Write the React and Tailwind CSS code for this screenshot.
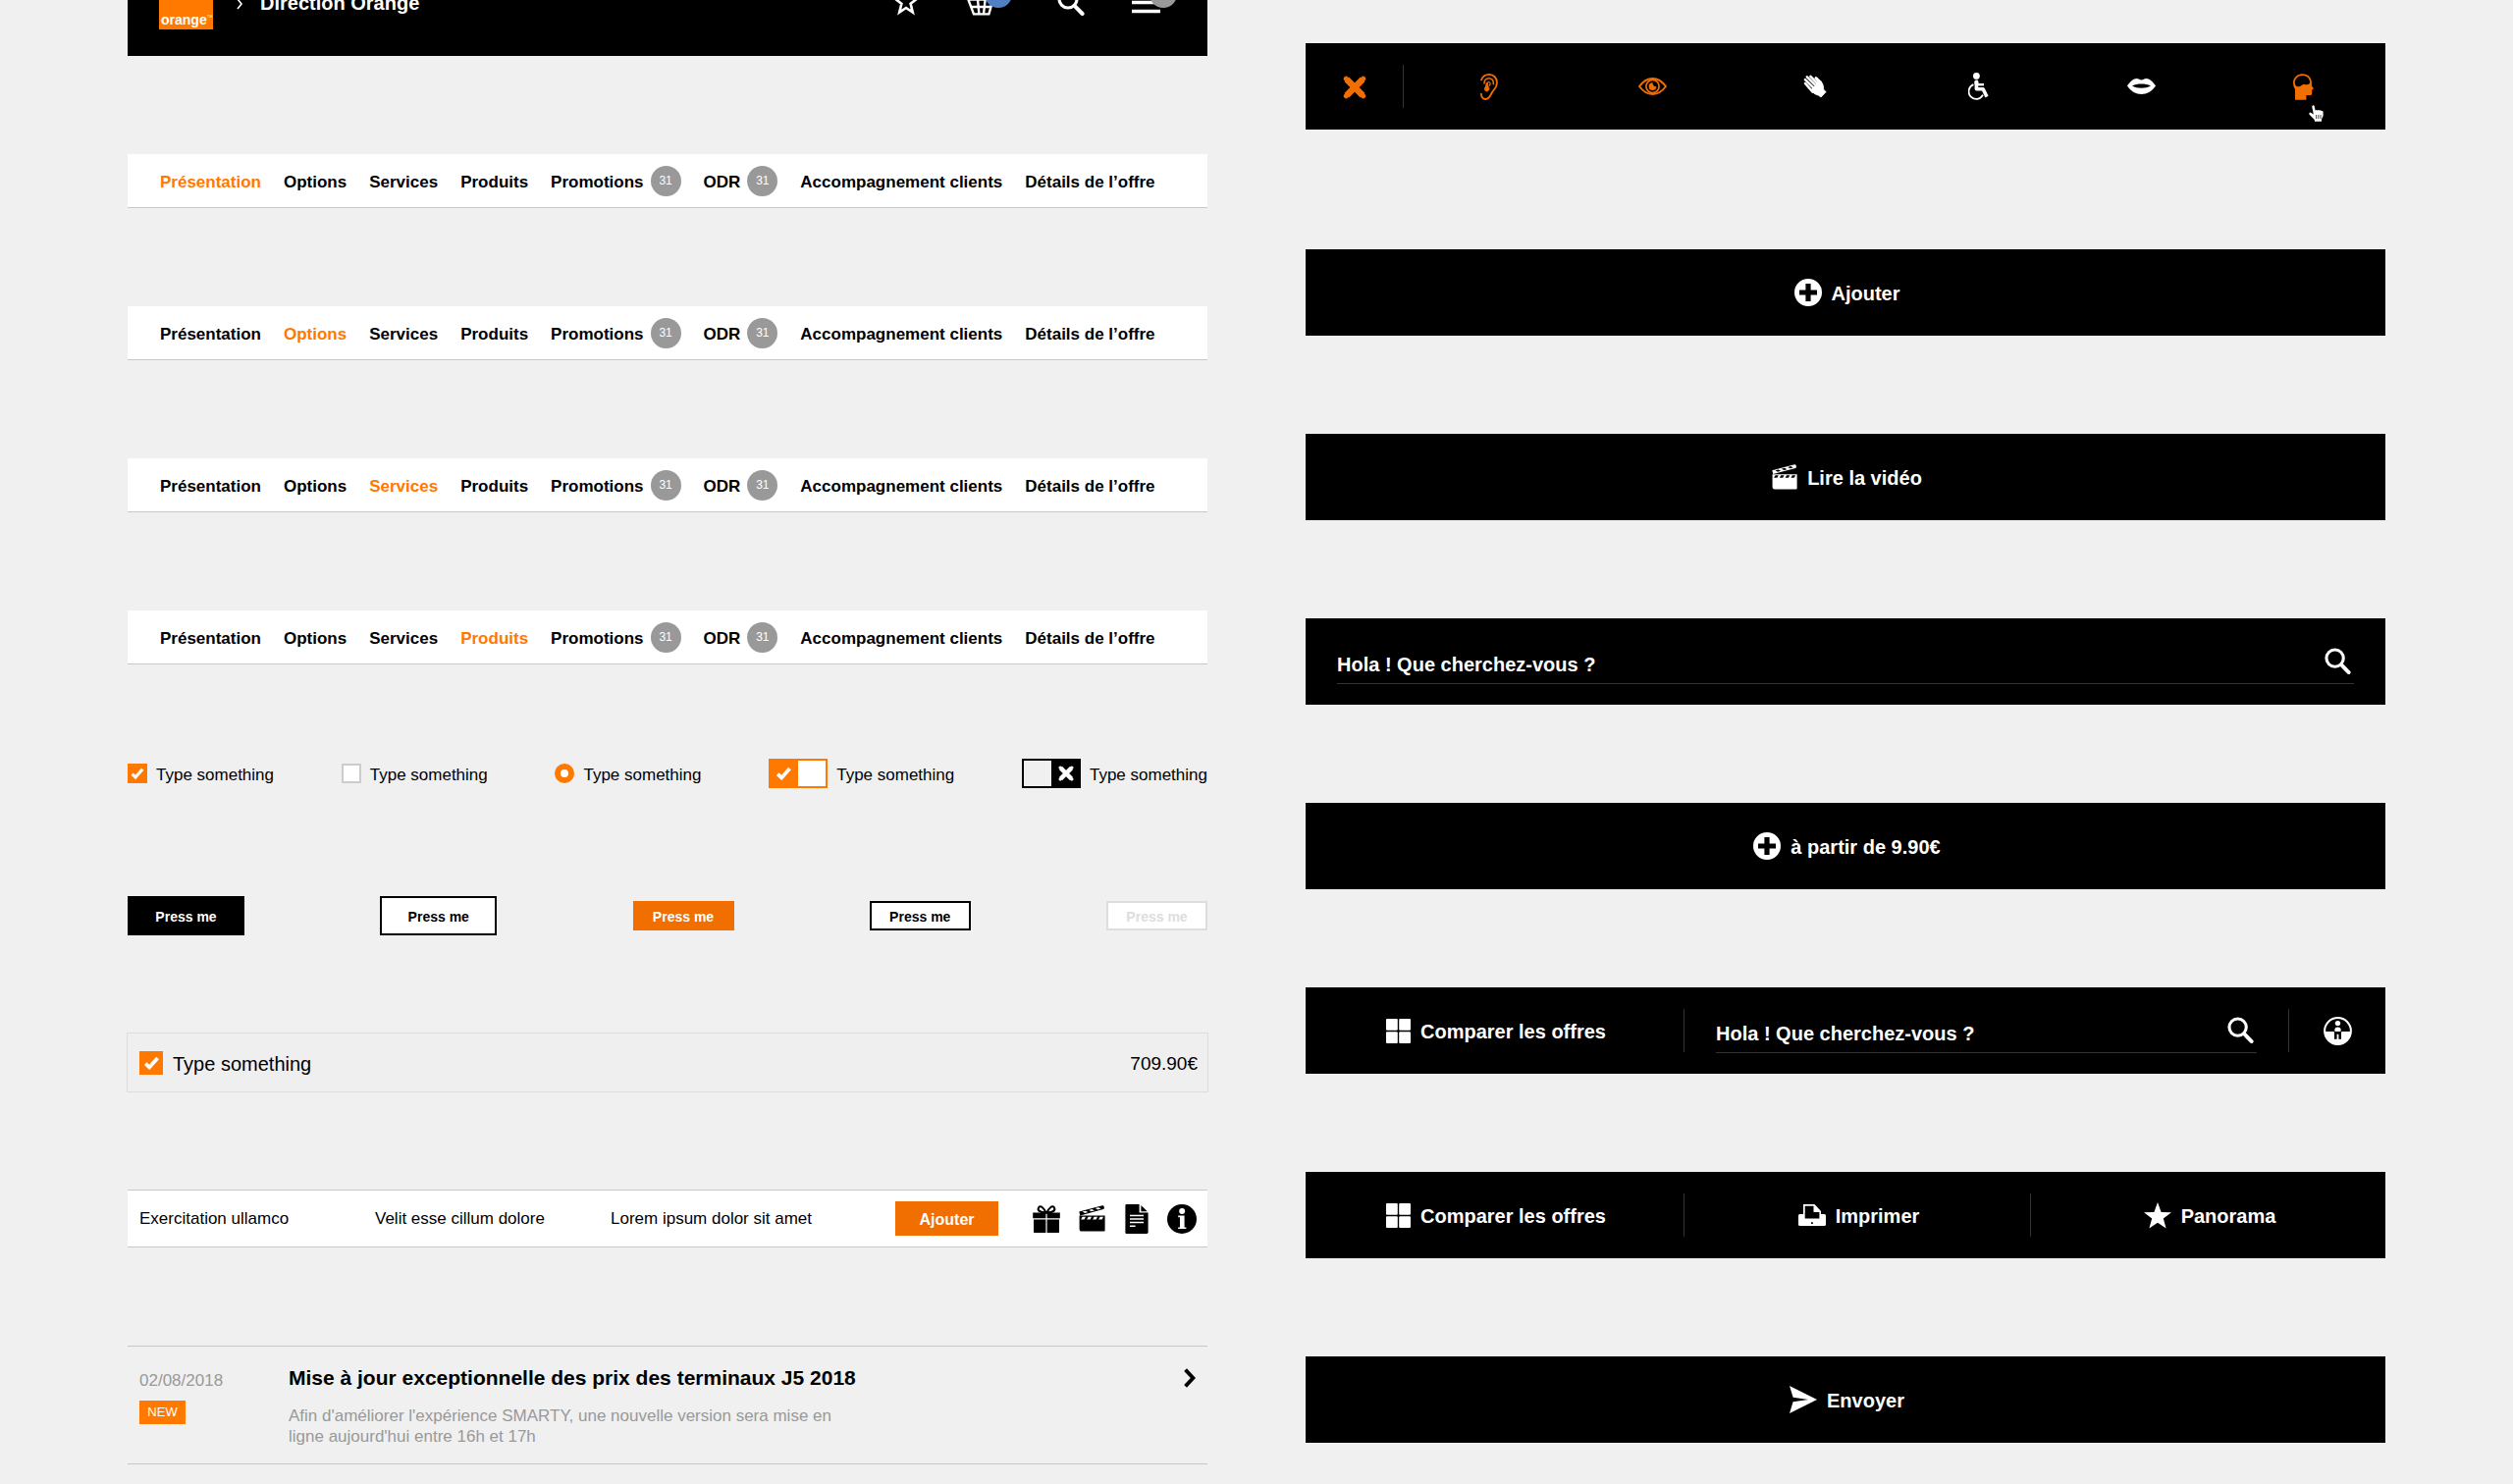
import React from "react";

function Clapper({ className }) {
  return (
    <svg viewBox="0 0 27 27" className={className} fill="currentColor" aria-hidden="true">
      <path
        fillRule="evenodd"
        d="M0.3 6.4 L24 0.3 Q25.2 0.1 25.6 1.2 L25.9 2.6 Q26 3.8 25 4.1 L1.3 10.4 Z M3.6 6.6 L6.2 8 L9.4 7.1 L6.8 5.7 Z M10.2 4.9 L12.8 6.3 L16 5.4 L13.4 4 Z M16.8 3.1 L19.4 4.5 L22.6 3.6 L20 2.2 Z"
      />
      <path
        fillRule="evenodd"
        d="M0.6 10.6 H26.6 V25.4 Q26.6 26.6 25.4 26.6 H3.2 Q0.6 26.6 0.6 24 Z M3.6 11.8 L2.2 14.4 H5.6 L7 11.8 Z M9.6 11.8 L8.2 14.4 H11.6 L13 11.8 Z M15.6 11.8 L14.2 14.4 H17.6 L19 11.8 Z M21.6 11.8 L20.2 14.4 H23.6 L25 11.8 Z"
      />
    </svg>
  );
}

function Magnifier({ className }) {
  return (
    <svg viewBox="0 0 28 28" className={className} fill="none" stroke="currentColor" aria-hidden="true">
      <circle cx="11" cy="11" r="9" strokeWidth="3.2" />
      <path d="M17.6 17.8 L25.6 26" strokeWidth="4" strokeLinecap="round" />
    </svg>
  );
}

function PlusDisc({ className }) {
  return (
    <svg viewBox="0 0 28 28" className={className} aria-hidden="true">
      <path
        fill="currentColor"
        fillRule="evenodd"
        d="M14 0 A14 14 0 1 1 14 28 A14 14 0 1 1 14 0 Z M11.4 5 V11.4 H5 V16.6 H11.4 V23 H16.6 V16.6 H23 V11.4 H16.6 V5 Z"
      />
    </svg>
  );
}

function FourSquares({ className }) {
  return (
    <svg viewBox="0 0 25 25" className={className} fill="currentColor" aria-hidden="true">
      <rect x="0" y="0" width="11.8" height="11.8" rx="1" />
      <rect x="13.2" y="0" width="11.8" height="11.8" rx="1" />
      <rect x="0" y="13.2" width="11.8" height="11.8" rx="1" />
      <rect x="13.2" y="13.2" width="11.8" height="11.8" rx="1" />
    </svg>
  );
}

function Printer({ className }) {
  return (
    <svg viewBox="0 0 28 22" className={className} aria-hidden="true">
      <path
        fill="currentColor"
        fillRule="evenodd"
        d="M5 0 H16.5 L23 7 V10 H26.5 Q28 10 28 11.5 V20.5 Q28 22 26.5 22 H1.5 Q0 22 0 20.5 V11.5 Q0 10 1.5 10 H5 Z M6.7 1.7 V14.5 H21.4 V8 H15.5 V1.7 Z M13 18.2 V20 H14.8 V18.2 Z"
      />
    </svg>
  );
}

function StarSolid({ className }) {
  return (
    <svg viewBox="0 0 28 27" className={className} fill="currentColor" aria-hidden="true">
      <path d="M14 0 L17.6 9.9 L28 10.2 L19.8 16.6 L22.6 26.6 L14 20.8 L5.4 26.6 L8.2 16.6 L0 10.2 L10.4 9.9 Z" />
    </svg>
  );
}

function PaperPlane({ className }) {
  return (
    <svg viewBox="0 0 28 28" className={className} fill="currentColor" aria-hidden="true">
      <path d="M0 0 L28 14 L0 28 L3.6 16.2 L19 14 L3.6 11.8 Z" />
    </svg>
  );
}

function Check({ className }) {
  return (
    <svg viewBox="0 0 14 12" className={className} aria-hidden="true">
      <path d="M1.6 6.6 L5 9.8 L12.2 1.8" fill="none" stroke="#fff" strokeWidth="3.2" />
    </svg>
  );
}

function Cross({ className }) {
  return (
    <svg viewBox="0 0 22 22" className={className} aria-hidden="true">
      <path d="M3.6 3.6 L18.4 18.4 M18.4 3.6 L3.6 18.4" stroke="currentColor" strokeWidth="6" />
      <path d="M3 3 L19 19 M19 3 L3 19" stroke="currentColor" strokeWidth="4.6" strokeLinecap="round" />
    </svg>
  );
}

function Ear() {
  return (
    <svg viewBox="0 0 18 27" className="h-[27px] w-[18px]" fill="none" stroke="currentColor" strokeLinecap="round" aria-hidden="true">
      <path d="M1 6.5 C2.5 2.6 5.6 0.9 9 0.9 C13.6 0.9 17 4.4 17 9.2 C17 13.4 14.5 15.6 12.4 18.4 C10.4 21.2 9.8 25.8 5.4 26 C2.6 26.1 0.9 24 0.9 20.6" strokeWidth="1.8" />
      <path d="M4 10 C4 6.4 6.2 4.7 8.6 4.7 C11.8 4.7 13.6 7 13.4 10.6" strokeWidth="1.6" />
      <path d="M7 10.6 C7.2 9 8 8.4 8.8 8.6 C10.6 9 10.4 11 9.4 12" strokeWidth="1.2" />
      <path d="M6.2 9.5 C6 13 4 14.6 4.4 16.6 C5 18.4 8.4 18.6 8.9 16 C9.2 14 7.6 13.6 7.8 11 Z" fill="currentColor" strokeWidth="0.8" />
    </svg>
  );
}

function Eye() {
  return (
    <svg viewBox="0 0 29 18" className="h-[18px] w-[29px]" fill="none" stroke="currentColor" aria-hidden="true">
      <path d="M1 9 C5 3.6 9.4 1 14.5 1 C19.6 1 24 3.6 28 9 C24 14.4 19.6 17 14.5 17 C9.4 17 5 14.4 1 9 Z" strokeWidth="1.9" strokeLinejoin="round" />
      <circle cx="14.5" cy="9" r="6.6" strokeWidth="1.7" />
      <path d="M14.5 5.2 A3.9 3.9 0 1 0 18.4 9.2 Q15 9.4 14.5 5.2 Z" fill="currentColor" stroke="none" />
    </svg>
  );
}

function Hand() {
  return (
    <svg viewBox="0 0 24 24" className="h-6 w-6" fill="none" stroke="currentColor" strokeLinecap="round" aria-hidden="true">
      <path d="M2 9 L9.6 17.6 M1.9 5.2 L11 14 M3.8 2.4 L13 11.4 M7.4 1.9 L15 9.6" strokeWidth="2.5" />
      <path d="M13 3.6 C14.6 5 15.4 6.6 17 7.4" strokeWidth="3" />
      <path d="M8 15.6 L14.8 8.4 L14 4.4 L18.2 7 Q20.6 9.4 20.8 15.4 L23.2 17.6 L18 23 L15.6 21.2 Q10.8 20.6 8 15.6 Z" fill="currentColor" strokeWidth="0.8" />
    </svg>
  );
}

function Wheelchair() {
  return (
    <svg viewBox="0 0 21 28" className="h-[28px] w-[21px]" aria-hidden="true">
      <circle cx="8.4" cy="3.4" r="3.4" fill="currentColor" />
      <path d="M8.4 10 V16.8 H15.2 L19 24.6" fill="none" stroke="currentColor" strokeWidth="3.6" strokeLinejoin="round" />
      <rect x="6.4" y="7.6" width="4" height="5" rx="1.6" fill="currentColor" />
      <rect x="9" y="11" width="7" height="2.4" fill="currentColor" />
      <path d="M5.4 12.2 A7.6 7.6 0 1 0 15 22.6" fill="none" stroke="currentColor" strokeWidth="1.8" />
    </svg>
  );
}

function Lips() {
  return (
    <svg viewBox="0 0 29 16" className="h-4 w-[29px]" aria-hidden="true">
      <path
        fill="currentColor"
        fillRule="evenodd"
        d="M0 7.6 C2.6 3.4 6.4 0 9.6 0 C11.6 0 13 1.4 14.5 1.4 C16 1.4 17.4 0 19.4 0 C22.6 0 26.4 3.4 29 7.6 C25 13.4 20 16 14.5 16 C9 16 4 13.4 0 7.6 Z M5 7.4 C10.6 10.4 18.4 10.4 24 7.4 C18.4 4.8 10.6 4.8 5 7.4 Z"
      />
    </svg>
  );
}

function Head() {
  return (
    <svg viewBox="0 0 22 27" className="h-[27px] w-[22px]" aria-hidden="true">
      <path
        fill="currentColor"
        fillRule="evenodd"
        d="M9.4 0.2 C15 0.2 18.8 4 18.9 9 L18.9 12.2 L21 15.6 L19.2 16.6 V20.4 Q19.2 22 17.6 22 H13.4 V26.8 H2 V16 Q0 13 0 9.4 C0 4.2 4.2 0.2 9.4 0.2 Z M9.4 1.9 C5 1.9 1.8 5.2 1.8 9.2 C1.8 11.4 3 13.2 5.2 13.3 C8 13.4 8.6 11 10.4 10.9 C13 10.9 14.2 11.6 16 10.7 C17.2 10 17.2 9.2 17.1 8.6 C16.8 4.6 13.6 1.9 9.4 1.9 Z"
      />
    </svg>
  );
}

function Pointer({ className }) {
  return (
    <svg viewBox="0 0 15 17" className={className} aria-hidden="true">
      <path
        fill="#fff"
        d="M4 0.4 C4.8 -0.1 5.4 0.3 5.6 1 L6.6 5.4 L7.6 5 L8.6 5.4 L9.8 5 L10.8 5.6 L12 5.2 L12.8 6 L14 6 L14.6 7 V11 L13 14.4 V16.8 H6 L5.6 14.8 L0.4 9.4 L0.4 8 L1.6 7.6 L4.8 9.6 L3.2 1.6 Z"
      />
      <path d="M7.6 10 V14 M9.8 10 V14 M12 10 V14" stroke="#222" strokeWidth="0.8" />
    </svg>
  );
}

function Inclusive({ className }) {
  return (
    <svg viewBox="0 0 29 29" className={className} aria-hidden="true">
      <circle cx="14.5" cy="14.5" r="13.4" fill="none" stroke="currentColor" strokeWidth="2" />
      <path d="M1.2 15 H27.8 A13.3 13.3 0 0 1 1.2 15 Z" fill="currentColor" />
      <circle cx="14.5" cy="6.6" r="2.7" fill="currentColor" />
      <path d="M10 15.2 V12 Q10.4 9.4 14.5 9.4 Q18.6 9.4 19 12 V15.2 Z" fill="#000" />
      <path d="M11.4 15.2 V12.4 Q11.6 10.4 14.5 10.4 Q17.4 10.4 17.6 12.4 V15.2 Z" fill="currentColor" />
      <path d="M11 15 H18 V22.8 H15.4 V17.8 H13.6 V22.8 H11 Z" fill="#000" />
    </svg>
  );
}

function Gift() {
  return (
    <svg viewBox="0 0 30 30" className="h-[30px] w-[30px]" aria-hidden="true">
      <path d="M14.6 8.6 C12.6 3.8 9 0.8 7.2 3.2 C5.4 6 8 8.4 14.6 8.6 Z M15.4 8.6 C17.4 3.8 21 0.8 22.8 3.2 C24.6 6 22 8.4 15.4 8.6 Z" fill="none" stroke="currentColor" strokeWidth="2" />
      <path d="M1.2 8.6 H14.4 V14.2 H1.2 Z M15.6 8.6 H28.8 V14.2 H15.6 Z M2 15.6 H14.4 V29 H2.8 Q2 29 2 28.2 Z M15.6 15.6 H28 V28.2 Q28 29 27.2 29 H15.6 Z" fill="currentColor" />
    </svg>
  );
}

function Document() {
  return (
    <svg viewBox="0 0 30 30" className="h-[30px] w-[30px]" aria-hidden="true">
      <path d="M4.6 0 H17.6 V8.6 H26.6 V28.6 Q26.6 30 25.2 30 H4.6 Q3.4 30 3.4 28.8 V1.2 Q3.4 0 4.6 0 Z M19.4 1 L25.8 7.2 H19.4 Z" fill="currentColor" />
      <path d="M8 11.4 H22 M8 15 H22 M8 18.6 H22 M8 22.2 H13.6" stroke="#fff" strokeWidth="1.5" />
    </svg>
  );
}

function Info() {
  return (
    <svg viewBox="0 0 30 30" className="h-[30px] w-[30px]" aria-hidden="true">
      <circle cx="15" cy="15" r="15" fill="currentColor" />
      <circle cx="15.2" cy="7" r="3" fill="#fff" />
      <path d="M11.2 11.6 H17.6 V23.4 H19.4 V25 H11.2 V23.4 H13 V13.2 H11.2 Z" fill="#fff" />
    </svg>
  );
}

const NAV = [
  { label: "Présentation" },
  { label: "Options" },
  { label: "Services" },
  { label: "Produits" },
  { label: "Promotions", count: 31 },
  { label: "ODR", count: 31 },
  { label: "Accompagnement clients" },
  { label: "Détails de l’offre" },
];

function NavBar({ active }) {
  return (
    <nav className="mt-[100px] flex h-[55px] items-center gap-[23px] border-b border-[#c8c8c8] bg-white px-[33px] text-[17px] leading-5 font-bold">
      {NAV.map((item) => (
        <a key={item.label} href="#" className={item.label === active ? "flex items-center gap-[7px] text-[#ff7900]" : "flex items-center gap-[7px] text-black"}>
          <span className="pt-[3px]">{item.label}</span>
          {item.count && (
            <span className="flex h-[31px] w-[31px] items-center justify-center rounded-full bg-[#999] text-[12px] leading-4 font-normal text-white">
              {item.count}
            </span>
          )}
        </a>
      ))}
    </nav>
  );
}

function Header() {
  return (
    <header className="-mt-[53px] flex h-[110px] items-center bg-black pr-12 pl-8 text-white">
      <a href="#" className="flex h-14 w-[55px] items-end bg-[#ff7900] pb-[2px] pl-[2px] text-[14px] leading-4 font-bold">
        orange
        <span className="mb-[9px] text-[4px] leading-none font-normal">TM</span>
      </a>
      <svg viewBox="0 0 6 12" className="mt-1 ml-6 h-3 w-[6px]" aria-hidden="true">
        <path d="M1 1 L5 6 L1 11" fill="none" stroke="currentColor" strokeWidth="1.6" />
      </svg>
      <span className="ml-[18px] pt-[2px] text-[20px] leading-6 font-bold">Direction Orange</span>
      <div className="ml-auto flex items-center">
        <button type="button" aria-label="Favoris" className="mr-12">
          <svg viewBox="0 0 28 28" className="h-[28px] w-[28px]" aria-hidden="true">
            <path d="M14 3 L16.8 10.4 L25 10.8 L18.6 15.8 L20.8 24.6 L14 20 L7.2 24.6 L9.4 15.8 L3 10.8 L11.2 10.4 Z" fill="none" stroke="currentColor" strokeWidth="2.6" />
          </svg>
        </button>
        <button type="button" aria-label="Panier" className="relative mr-16 flex">
          <svg viewBox="0 0 28 28" className="h-[28px] w-[28px]" fill="none" stroke="currentColor" strokeWidth="2.4" aria-hidden="true">
            <path d="M1.4 11.6 H26.6 L22.4 26.4 H7 Z M4.4 19 H24.6 M11 11.6 L12.4 26.4 M18.6 11.6 L17 26.4 M7 11 L12 2 M21 11 L17 2" />
          </svg>
          <span className="absolute -top-2 left-[18px] h-[28px] w-[28px] rounded-full bg-[#5080c4]" />
        </button>
        <button type="button" aria-label="Rechercher" className="mr-12">
          <Magnifier className="h-[28px] w-[28px]" />
        </button>
        <button type="button" aria-label="Menu" className="relative">
          <svg viewBox="0 0 29 28" className="h-[28px] w-[29px]" aria-hidden="true">
            <path d="M0 5.5 H29 M0 14.5 H29 M0 23.5 H29" stroke="currentColor" strokeWidth="3.4" />
          </svg>
          <span className="absolute -top-2 left-[18px] h-[28px] w-[28px] rounded-full bg-[#999]" />
        </button>
      </div>
    </header>
  );
}

function CheckField({ defaultChecked }) {
  return (
    <label className="flex items-center gap-[9px]">
      <span className="relative flex">
        <input type="checkbox" defaultChecked={defaultChecked} className="peer h-5 w-5 appearance-none border-2 border-[#ccc] bg-white checked:border-[#ff7900] checked:bg-[#ff7900]" />
        <Check className="pointer-events-none absolute inset-0 m-auto hidden h-3 w-[14px] peer-checked:block" />
      </span>
      <span className="pt-[3px]">Type something</span>
    </label>
  );
}

function RadioField() {
  return (
    <label className="flex items-center gap-[9px]">
      <input type="radio" name="choice" defaultChecked className="h-5 w-5 appearance-none rounded-full border-[6px] border-[#ff7900] bg-white" />
      <span className="pt-[3px]">Type something</span>
    </label>
  );
}

function SwitchField({ defaultChecked }) {
  return (
    <label className="flex items-center gap-[9px]">
      <span className="relative grid h-[30px] w-[60px] grid-cols-2">
        <input type="checkbox" role="switch" defaultChecked={defaultChecked} className="peer absolute inset-0 appearance-none border-2 border-black checked:border-[#ff7900] checked:bg-white" />
        <span className="pointer-events-none relative hidden items-center justify-center bg-[#ff7900] peer-checked:flex">
          <Check className="h-[14px] w-[17px]" />
        </span>
        <span className="pointer-events-none relative col-start-2 flex items-center justify-center bg-black text-white peer-checked:hidden">
          <Cross className="h-4 w-4" />
        </span>
      </span>
      <span className="pt-[3px]">Type something</span>
    </label>
  );
}

function Divider() {
  return <span className="h-11 w-px shrink-0 bg-[#333]" />;
}

function Action({ icon, children }) {
  return (
    <button type="button" className="flex h-full min-w-0 flex-1 items-center justify-center gap-[10px] pl-[3px]">
      {icon}
      <span className="pt-[2px]">{children}</span>
    </button>
  );
}

function Bar({ children }) {
  return <section className="flex h-[88px] items-center bg-black text-[20px] leading-6 font-bold text-white">{children}</section>;
}

function SearchField() {
  return (
    <label className="mx-8 flex h-[46px] flex-1 items-center border-b border-[#333]">
      <input type="search" aria-label="Recherche" placeholder="Hola ! Que cherchez-vous ?" className="min-w-0 flex-1 pt-[7px] outline-none placeholder:text-white placeholder:opacity-100" />
      <Magnifier className="mr-[3px] h-[27px] w-[27px]" />
    </label>
  );
}

function AccessibilityBar() {
  return (
    <Bar>
      <button type="button" aria-label="Fermer" className="flex w-[99px] justify-center pt-[2px] text-[#f16e00]">
        <Cross className="h-6 w-6" />
      </button>
      <Divider />
      <div className="ml-1 grid flex-1 grid-cols-6 items-center justify-items-center">
        <button type="button" aria-label="Audition" className="text-[#f16e00]"><Ear /></button>
        <button type="button" aria-label="Vision" className="text-[#f16e00]"><Eye /></button>
        <button type="button" aria-label="Préhension"><Hand /></button>
        <button type="button" aria-label="Mobilité"><Wheelchair /></button>
        <button type="button" aria-label="Parole"><Lips /></button>
        <button type="button" aria-label="Cognition" className="relative text-[#f16e00]">
          <Head />
          <Pointer className="absolute top-8 left-4 h-[17px] w-[15px]" />
        </button>
      </div>
    </Bar>
  );
}

export default function App() {
  return (
    <main
      className="grid min-h-screen grid-cols-2 gap-[100px] overflow-hidden bg-[#f0f0f0] px-[130px] text-black"
      style={{ fontFamily: '"Liberation Sans", Arial, sans-serif' }}
    >
      <div className="min-w-0">
        <Header />
        <NavBar active="Présentation" />
        <NavBar active="Options" />
        <NavBar active="Services" />
        <NavBar active="Produits" />

        <div className="mt-24 flex h-[30px] items-center justify-between text-[17px] leading-5">
          <CheckField defaultChecked />
          <CheckField />
          <RadioField />
          <SwitchField defaultChecked />
          <SwitchField />
        </div>

        <div className="mt-[110px] flex items-center justify-between text-[14px] leading-4 font-bold">
          <button type="button" className="h-10 w-[119px] border-2 border-black bg-black pt-[2px] text-white">Press me</button>
          <button type="button" className="h-10 w-[119px] border-2 border-black bg-white pt-[2px]">Press me</button>
          <button type="button" className="h-[30px] w-[103px] border-2 border-[#f16e00] bg-[#f16e00] pt-[2px] text-white">Press me</button>
          <button type="button" className="h-[30px] w-[103px] border-2 border-black bg-white pt-[2px]">Press me</button>
          <button type="button" disabled className="h-[30px] w-[103px] border-2 border-[#ddd] bg-white pt-[2px] text-[#ddd]">Press me</button>
        </div>

        <div className="-mx-px mt-[99px] flex h-[61px] items-center justify-between border border-[#ddd] bg-[#efefef] pr-[10px] pl-3 text-[20px] leading-6">
          <label className="flex items-center gap-[10px]">
            <span className="relative flex">
              <input type="checkbox" defaultChecked className="h-6 w-6 appearance-none bg-[#ff7900]" />
              <Check className="pointer-events-none absolute inset-0 m-auto h-[14px] w-[17px]" />
            </span>
            <span className="pt-[2px]">Type something</span>
          </label>
          <span className="pt-[2px] text-[19px]">709.90€</span>
        </div>

        <div className="mt-[99px] flex h-[59px] items-center border-y border-[#c8c8c8] bg-white pr-[11px] pl-3 text-[17px] leading-5">
          <span className="w-60">Exercitation ullamco</span>
          <span className="w-60">Velit esse cillum dolore</span>
          <span>Lorem ipsum dolor sit amet</span>
          <button type="button" className="mr-[34px] ml-auto h-[35px] w-[105px] bg-[#f16e00] pt-[2px] text-[16px] font-bold text-white">Ajouter</button>
          <div className="flex gap-4">
            <button type="button" aria-label="Cadeau"><Gift /></button>
            <button type="button" aria-label="Vidéo" className="flex w-[30px] items-center justify-center"><Clapper className="h-[27px] w-[27px]" /></button>
            <button type="button" aria-label="Document"><Document /></button>
            <button type="button" aria-label="Informations"><Info /></button>
          </div>
        </div>

        <article className="mt-[100px] flex h-[121px] border-y border-[#c8c8c8] px-3 pt-5 text-[17px] leading-[21px] text-[#999]">
          <div className="w-[152px] pt-1">
            <time dateTime="2018-08-02" className="block">02/08/2018</time>
            <span className="mt-[10px] flex h-6 w-[47px] items-center justify-center bg-[#ff7900] text-[13px] leading-4 text-white">NEW</span>
          </div>
          <div className="w-[600px]">
            <h2 className="text-[21px] leading-6 font-bold text-black">
              <a href="#">Mise à jour exceptionnelle des prix des terminaux J5 2018</a>
            </h2>
            <p className="mt-4 w-[580px]">
              Afin d'améliorer l'expérience SMARTY, une nouvelle version sera mise en ligne aujourd'hui entre 16h et 17h
            </p>
          </div>
          <svg viewBox="0 0 12 20" className="mt-[2px] ml-auto h-5 w-3 text-black" aria-hidden="true">
            <path d="M1.6 1.6 L9.4 10 L1.6 18.4" fill="none" stroke="currentColor" strokeWidth="3.8" />
          </svg>
        </article>
      </div>

      <div className="flex min-w-0 flex-col gap-[100px] pt-11">
        <div className="mb-[22px]">
          <AccessibilityBar />
        </div>
        <Bar><Action icon={<PlusDisc className="h-7 w-7" />}>Ajouter</Action></Bar>
        <Bar><Action icon={<Clapper className="h-[26px] w-[26px]" />}>Lire la vidéo</Action></Bar>
        <Bar><SearchField /></Bar>
        <Bar><Action icon={<PlusDisc className="h-7 w-7" />}>à partir de 9.90€</Action></Bar>
        <Bar>
          <div className="flex h-full w-[35%]">
            <Action icon={<FourSquares className="h-[25px] w-[25px]" />}>Comparer les offres</Action>
          </div>
          <Divider />
          <SearchField />
          <Divider />
          <button type="button" aria-label="Accessibilité" className="flex w-[98px] justify-center">
            <Inclusive className="h-[29px] w-[29px]" />
          </button>
        </Bar>
        <Bar>
          <div className="flex h-full w-[35%]">
            <Action icon={<FourSquares className="h-[25px] w-[25px]" />}>Comparer les offres</Action>
          </div>
          <Divider />
          <div className="flex h-full w-[32%]">
            <Action icon={<Printer className="h-[22px] w-7" />}>Imprimer</Action>
          </div>
          <Divider />
          <Action icon={<StarSolid className="h-[27px] w-7" />}>Panorama</Action>
        </Bar>
        <Bar><Action icon={<PaperPlane className="h-7 w-7" />}>Envoyer</Action></Bar>
      </div>
    </main>
  );
}
